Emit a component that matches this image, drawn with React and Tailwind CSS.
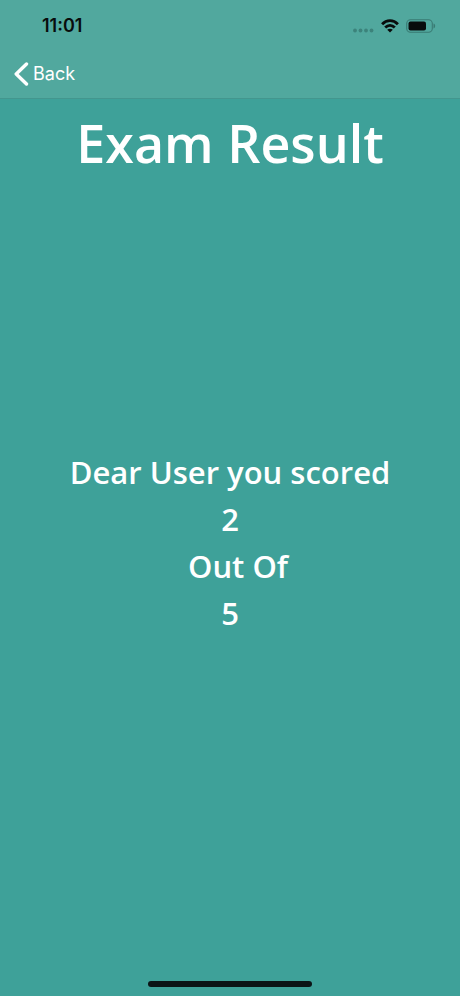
function StatusIcons() {
  return (
    <div className="flex items-center gap-[7px]" aria-hidden="true">
      <svg width="21" height="14" viewBox="0 0 21 14" fill="#3c837b">
        <circle cx="2" cy="11.5" r="1.9" />
        <circle cx="7.5" cy="11.5" r="1.9" />
        <circle cx="13" cy="11.5" r="1.9" />
        <circle cx="18.5" cy="11.5" r="1.9" />
      </svg>
      <svg width="18" height="14" viewBox="0 0 18 14" fill="none" stroke="#080c0c" strokeWidth="2.8">
        <path d="M1.1 5.2C5.6.4 12.4.4 16.9 5.2" />
        <path d="M4.2 8.6C7 5.8 11 5.8 13.8 8.6" />
        <path d="M6.2 10.8C7.7 9.4 10.3 9.4 11.8 10.8L9 13.6Z" fill="#080c0c" stroke="none" />
      </svg>
      <svg width="30" height="14" viewBox="0 0 30 14">
        <rect x=".7" y=".7" width="25.6" height="12.6" rx="3.8" fill="none" stroke="#397a73" strokeWidth="1.1" />
        <rect x="2.5" y="2.5" width="17.5" height="9" rx="2" fill="#080c0c" />
        <path d="M27.5 4.6C29.7 5.2 29.7 8.8 27.5 9.4Z" fill="#397a73" />
      </svg>
    </div>
  );
}

export default function App() {
  return (
    <div className="flex min-h-screen flex-col bg-[#3ea199] text-white">
      <header className="border-b border-[#43968e] bg-[#51a89e] font-['Inter',sans-serif]">
        <div className="flex h-[50px] items-center justify-between pt-px pr-6 pl-[42px]">
          <time className="text-lg font-semibold text-[#080c0c]">11:01</time>
          <StatusIcons />
        </div>
        <nav className="flex h-12 items-center px-[14px]">
          <button type="button" className="flex items-center gap-1 text-lg">
            <svg width="15" height="24" viewBox="0 0 15 24" fill="none" stroke="currentColor" strokeWidth="3.4" strokeLinecap="round" strokeLinejoin="round" aria-hidden="true">
              <path d="M12.5 2 2.2 12 12.5 22" />
            </svg>
            Back
          </button>
        </nav>
      </header>
      <main className="flex flex-1 flex-col text-center font-['Open_Sans',sans-serif] font-semibold">
        <h1 className="pt-2 text-[52px] leading-[72px]">Exam Result</h1>
        <div className="flex flex-1 flex-col justify-center pb-[74px] text-[31px] leading-[47px]">
          <p>Dear User you scored</p>
          <p>2</p>
          <p className="whitespace-pre">{"  Out Of"}</p>
          <p>5</p>
        </div>
      </main>
      <footer className="flex justify-center pb-[9px]">
        <div className="h-[6px] w-[164px] rounded-full bg-[#0b1416]" />
      </footer>
    </div>
  );
}
